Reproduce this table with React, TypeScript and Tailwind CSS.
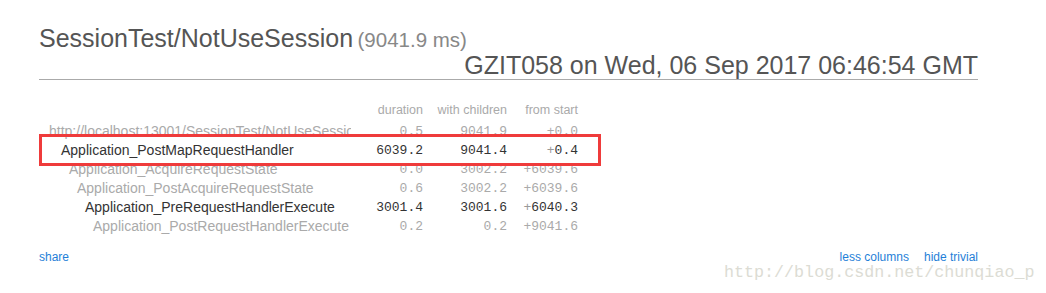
import React from 'react';

type Row = {
  name: string;
  indent: string;
  duration: string;
  children: string;
  start: string;
  trivial: boolean;
};

const rows: Row[] = [
  { name: 'http://localhost:13001/SessionTest/NotUseSession', indent: 'pl-[10px]', duration: '0.5', children: '9041.9', start: '0.0', trivial: true },
  { name: 'Application_PostMapRequestHandler', indent: 'pl-[22px]', duration: '6039.2', children: '9041.4', start: '0.4', trivial: false },
  { name: 'Application_AcquireRequestState', indent: 'pl-[30px]', duration: '0.0', children: '3002.2', start: '6039.6', trivial: true },
  { name: 'Application_PostAcquireRequestState', indent: 'pl-[38px]', duration: '0.6', children: '3002.2', start: '6039.6', trivial: true },
  { name: 'Application_PreRequestHandlerExecute', indent: 'pl-[46px]', duration: '3001.4', children: '3001.6', start: '6040.3', trivial: false },
  { name: 'Application_PostRequestHandlerExecute', indent: 'pl-[54px]', duration: '0.2', children: '0.2', start: '9041.6', trivial: true },
];

const sans = "font-['Liberation_Sans',Arial,sans-serif]";
const mono = "font-['Liberation_Mono','DejaVu_Sans_Mono',monospace]";

export default function App() {
  return (
    <div className={`relative w-[1046px] h-[293px] bg-white overflow-hidden ${sans}`}>
      <div className="pl-[39px] pr-[68px] pt-[25px]">
        {/* header */}
        <div className="border-b border-[#aaaaaa] pb-[4px]">
          <div className="leading-[26px] text-[#555555]">
            <span className="text-[25px]">SessionTest/NotUseSession</span>{' '}
            <span className="text-[20.5px] text-[#888888]">(9041.9 ms)</span>
          </div>
          <div className="text-right text-[25px] leading-[20px] text-[#555555]">
            GZIT058 on Wed, 06 Sep 2017 06:46:54 GMT
          </div>
        </div>

        {/* timings */}
        <div className="mt-[21px]">
          <div className="mb-[2px] flex h-[19px] items-center text-[12.5px] text-[#aaaaaa]">
            <div className="w-[324px]" />
            <div className="w-[60px] text-right">duration</div>
            <div className="w-[84px] text-right">with children</div>
            <div className="w-[71px] text-right">from start</div>
          </div>
          {rows.map((r) => {
            const color = r.trivial ? 'text-[#aaaaaa]' : 'text-[#333333]';
            return (
              <div key={r.name} className={`flex h-[19px] items-center ${color}`}>
                <div className="w-[324px] pr-[12px]">
                  <div className={`overflow-hidden whitespace-nowrap text-[14px] ${r.indent}`}>{r.name}</div>
                </div>
                <div className={`w-[60px] text-right text-[13px] ${mono}`}>{r.duration}</div>
                <div className={`w-[84px] text-right text-[13px] ${mono}`}>{r.children}</div>
                <div className={`w-[71px] text-right text-[13px] ${mono}`}>
                  <span className={r.trivial ? '' : 'text-[#999999]'}>+</span>
                  {r.start}
                </div>
              </div>
            );
          })}
        </div>

        {/* footer links */}
        <div className="mt-[13px] flex items-center text-[12px] leading-[16px] text-[#1f7fd8]">
          <span>share</span>
          <span className="ml-auto">less columns</span>
          <span className="ml-[15px]">hide trivial</span>
        </div>
      </div>

      {/* annotation box */}
      <div className="absolute left-[39px] top-[134px] h-[32px] w-[562px] border-[3px] border-[#ef3b3b]" />

      {/* watermark */}
      <div className={`absolute left-[724px] top-[265px] text-[16.7px] leading-[16px] text-[#dcdcd4] ${mono}`}>
        http://blog.csdn.net/chunqiao_p
      </div>
    </div>
  );
}
